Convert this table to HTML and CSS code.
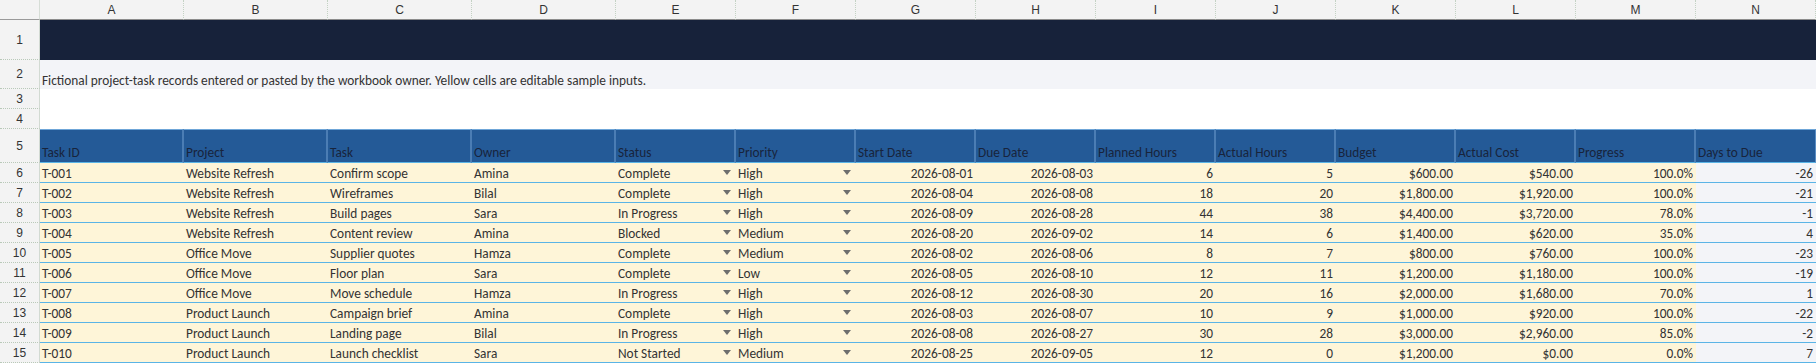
FILE: index.html
```html
<!DOCTYPE html>
<html>
<head>
<meta charset="utf-8">
<link rel="stylesheet" href="styles.css">
</head>
<body>
<div class="sheet">
  <div class="corner"></div>
  <div class="colh">A</div><div class="colh">B</div><div class="colh">C</div><div class="colh">D</div><div class="colh">E</div><div class="colh">F</div><div class="colh">G</div><div class="colh">H</div><div class="colh">I</div><div class="colh">J</div><div class="colh">K</div><div class="colh">L</div><div class="colh">M</div><div class="colh">N</div>

  <div class="rowh">1</div><div class="banner"></div>
  <div class="rowh">2</div><div class="desc"><span class="desc-text">Fictional project-task records entered or pasted by the workbook owner. Yellow cells are editable sample inputs.</span></div>
  <div class="rowh">3</div><div class="blank"></div>
  <div class="rowh">4</div><div class="blank"></div>

  <div class="rowh">5</div>
  <div class="th">Task ID</div><div class="th">Project</div><div class="th">Task</div><div class="th">Owner</div><div class="th">Status</div><div class="th">Priority</div><div class="th">Start Date</div><div class="th">Due Date</div><div class="th">Planned Hours</div><div class="th">Actual Hours</div><div class="th">Budget</div><div class="th">Actual Cost</div><div class="th">Progress</div><div class="th th-last">Days to Due</div>

  <div class="rowh">6</div>
  <div class="c">T-001</div><div class="c">Website Refresh</div><div class="c">Confirm scope</div><div class="c">Amina</div><div class="c dd"><span>Complete</span><i class="arrow"></i></div><div class="c dd"><span>High</span><i class="arrow"></i></div><div class="c r">2026-08-01</div><div class="c r">2026-08-03</div><div class="c r">6</div><div class="c r">5</div><div class="c r">$600.00</div><div class="c r">$540.00</div><div class="c r">100.0%</div><div class="c r due">-26</div>

  <div class="rowh">7</div>
  <div class="c">T-002</div><div class="c">Website Refresh</div><div class="c">Wireframes</div><div class="c">Bilal</div><div class="c dd"><span>Complete</span><i class="arrow"></i></div><div class="c dd"><span>High</span><i class="arrow"></i></div><div class="c r">2026-08-04</div><div class="c r">2026-08-08</div><div class="c r">18</div><div class="c r">20</div><div class="c r">$1,800.00</div><div class="c r">$1,920.00</div><div class="c r">100.0%</div><div class="c r due">-21</div>

  <div class="rowh">8</div>
  <div class="c">T-003</div><div class="c">Website Refresh</div><div class="c">Build pages</div><div class="c">Sara</div><div class="c dd"><span>In Progress</span><i class="arrow"></i></div><div class="c dd"><span>High</span><i class="arrow"></i></div><div class="c r">2026-08-09</div><div class="c r">2026-08-28</div><div class="c r">44</div><div class="c r">38</div><div class="c r">$4,400.00</div><div class="c r">$3,720.00</div><div class="c r">78.0%</div><div class="c r due">-1</div>

  <div class="rowh">9</div>
  <div class="c">T-004</div><div class="c">Website Refresh</div><div class="c">Content review</div><div class="c">Amina</div><div class="c dd"><span>Blocked</span><i class="arrow"></i></div><div class="c dd"><span>Medium</span><i class="arrow"></i></div><div class="c r">2026-08-20</div><div class="c r">2026-09-02</div><div class="c r">14</div><div class="c r">6</div><div class="c r">$1,400.00</div><div class="c r">$620.00</div><div class="c r">35.0%</div><div class="c r due">4</div>

  <div class="rowh">10</div>
  <div class="c">T-005</div><div class="c">Office Move</div><div class="c">Supplier quotes</div><div class="c">Hamza</div><div class="c dd"><span>Complete</span><i class="arrow"></i></div><div class="c dd"><span>Medium</span><i class="arrow"></i></div><div class="c r">2026-08-02</div><div class="c r">2026-08-06</div><div class="c r">8</div><div class="c r">7</div><div class="c r">$800.00</div><div class="c r">$760.00</div><div class="c r">100.0%</div><div class="c r due">-23</div>

  <div class="rowh">11</div>
  <div class="c">T-006</div><div class="c">Office Move</div><div class="c">Floor plan</div><div class="c">Sara</div><div class="c dd"><span>Complete</span><i class="arrow"></i></div><div class="c dd"><span>Low</span><i class="arrow"></i></div><div class="c r">2026-08-05</div><div class="c r">2026-08-10</div><div class="c r">12</div><div class="c r">11</div><div class="c r">$1,200.00</div><div class="c r">$1,180.00</div><div class="c r">100.0%</div><div class="c r due">-19</div>

  <div class="rowh">12</div>
  <div class="c">T-007</div><div class="c">Office Move</div><div class="c">Move schedule</div><div class="c">Hamza</div><div class="c dd"><span>In Progress</span><i class="arrow"></i></div><div class="c dd"><span>High</span><i class="arrow"></i></div><div class="c r">2026-08-12</div><div class="c r">2026-08-30</div><div class="c r">20</div><div class="c r">16</div><div class="c r">$2,000.00</div><div class="c r">$1,680.00</div><div class="c r">70.0%</div><div class="c r due">1</div>

  <div class="rowh">13</div>
  <div class="c">T-008</div><div class="c">Product Launch</div><div class="c">Campaign brief</div><div class="c">Amina</div><div class="c dd"><span>Complete</span><i class="arrow"></i></div><div class="c dd"><span>High</span><i class="arrow"></i></div><div class="c r">2026-08-03</div><div class="c r">2026-08-07</div><div class="c r">10</div><div class="c r">9</div><div class="c r">$1,000.00</div><div class="c r">$920.00</div><div class="c r">100.0%</div><div class="c r due">-22</div>

  <div class="rowh">14</div>
  <div class="c">T-009</div><div class="c">Product Launch</div><div class="c">Landing page</div><div class="c">Bilal</div><div class="c dd"><span>In Progress</span><i class="arrow"></i></div><div class="c dd"><span>High</span><i class="arrow"></i></div><div class="c r">2026-08-08</div><div class="c r">2026-08-27</div><div class="c r">30</div><div class="c r">28</div><div class="c r">$3,000.00</div><div class="c r">$2,960.00</div><div class="c r">85.0%</div><div class="c r due">-2</div>

  <div class="rowh">15</div>
  <div class="c">T-010</div><div class="c">Product Launch</div><div class="c">Launch checklist</div><div class="c">Sara</div><div class="c dd"><span>Not Started</span><i class="arrow"></i></div><div class="c dd"><span>Medium</span><i class="arrow"></i></div><div class="c r">2026-08-25</div><div class="c r">2026-09-05</div><div class="c r">12</div><div class="c r">0</div><div class="c r">$1,200.00</div><div class="c r">$0.00</div><div class="c r">0.0%</div><div class="c r due">7</div>
</div>
</body>
</html>
```

FILE: styles.css
```css
html, body {
  margin: 0;
  padding: 0;
  background: #ffffff;
}

.sheet {
  display: grid;
  grid-template-columns: 40px repeat(4, 144px) repeat(10, 120px);
  grid-template-rows: 20px 40px 29px 20px 20px 34px repeat(10, 20px);
  width: 1816px;
  height: 363px;
  overflow: hidden;
  font-family: Carlito, Calibri, "Open Sans", sans-serif;
  font-size: 13.33px;
  color: #333333;
}

.sheet > div {
  box-sizing: border-box;
  min-width: 0;
}

.corner {
  background: #f3f3f3;
  border-right: 1px solid #d6ddd6;
  border-bottom: 1px solid #9a9a9a;
}

.colh {
  background: #f3f3f3;
  border-right: 1px dotted #c4d2c4;
  border-bottom: 1px solid #8c8c8c;
  font-family: "Liberation Sans", Arial, sans-serif;
  font-size: 12px;
  color: #333333;
  display: flex;
  align-items: center;
  justify-content: center;
}

.rowh {
  background: #f3f3f3;
  border-right: 1px solid #d2dad2;
  border-bottom: 1px dotted #b9c9b9;
  font-family: "Liberation Sans", Arial, sans-serif;
  font-size: 12px;
  color: #333333;
  display: flex;
  align-items: center;
  justify-content: center;
}

.banner {
  grid-column: span 14;
  background: #17223a;
}

.desc {
  grid-column: span 14;
  background: #f3f4f8;
  display: flex;
  align-items: flex-end;
  padding: 0 0 0 2px;
  white-space: nowrap;
}

.desc-text {
  line-height: 15px;
  padding-bottom: 1px;
}

.blank {
  grid-column: span 14;
  background: #ffffff;
}

.th {
  background: #245a97;
  color: #18243c;
  border-top: 1px solid #6fa6d8;
  border-right: 2px solid #4b7db4;
  border-bottom: 1px solid #5ab4e6;
  display: flex;
  align-items: flex-end;
  padding: 0 2px 2px 2px;
  white-space: nowrap;
  line-height: 15px;
}

.th-last {
  border-right: 1px solid #5a8cc2;
}

.c {
  background: #fef5d8;
  border-bottom: 1px solid #5ab4e6;
  display: flex;
  align-items: flex-end;
  padding: 0 3px 1px 2px;
  white-space: nowrap;
  line-height: 15px;
}

.r {
  justify-content: flex-end;
}

.due {
  background: #f3f4f8;
}

.dd {
  justify-content: space-between;
  padding-right: 5px;
}

.arrow {
  align-self: flex-start;
  margin-top: 7px;
  width: 0;
  height: 0;
  border-left: 4px solid transparent;
  border-right: 4px solid transparent;
  border-top: 5px solid #6e6e6e;
}
```
